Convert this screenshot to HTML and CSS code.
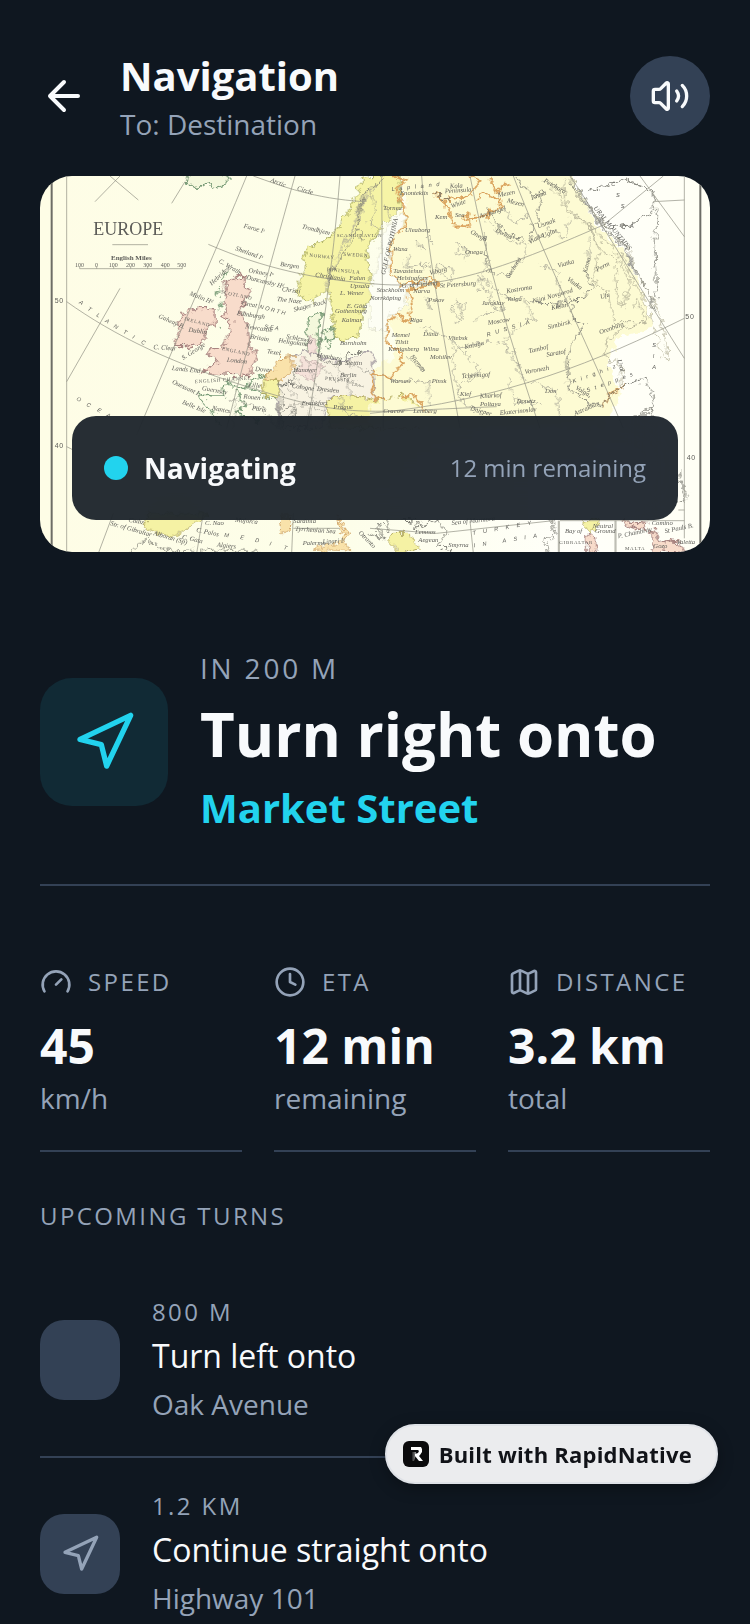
FILE: index.html
```html
<!DOCTYPE html>
<html lang="en">
<head>
<meta charset="utf-8">
<meta name="viewport" content="width=device-width, initial-scale=1">
<title>Navigation</title>
<link rel="stylesheet" href="styles.css">
</head>
<body>
<svg class="sprite" aria-hidden="true">
  <symbol id="i-nav" viewBox="0 0 24 24"><path d="M3 11 22 2 13 21 11 13Z"/></symbol>
</svg>
<main class="screen">
  <header class="header">
    <button class="back" type="button" aria-label="Back">
      <svg class="icon icon-lg" viewBox="0 0 24 24"><path d="m12 19-7-7 7-7M19 12H5"/></svg>
    </button>
    <div class="header-text">
      <h1 class="title">Navigation</h1>
      <p class="body-muted">To: Destination</p>
    </div>
    <button class="sound" type="button" aria-label="Sound">
      <svg class="icon icon-md" viewBox="0 0 24 24"><path d="M11 4.702a.705.705 0 0 0-1.203-.498L6.413 7.587A1.4 1.4 0 0 1 5.416 8H3a1 1 0 0 0-1 1v6a1 1 0 0 0 1 1h2.416a1.4 1.4 0 0 1 .997.413l3.383 3.384A.705.705 0 0 0 11 19.298zM16 9a5 5 0 0 1 0 6M19.364 18.364a9 9 0 0 0 0-12.728"/></svg>
    </button>
  </header>

  <section class="map" aria-label="Map">
    <svg class="map-art" viewBox="0 0 2010 1128" preserveAspectRatio="xMidYMid slice">
      <defs>
        <filter id="rough" x="-5%" y="-5%" width="110%" height="110%">
          <feTurbulence type="fractalNoise" baseFrequency="0.05" numOctaves="3" seed="4"/>
          <feDisplacementMap in="SourceGraphic" scale="34" xChannelSelector="R" yChannelSelector="G"/>
        </filter>
        <linearGradient id="paper" x1="0" x2="1" y1="0" y2="0">
          <stop offset="0" stop-color="#fefde6"/><stop offset=".45" stop-color="#fdfee9"/><stop offset=".8" stop-color="#fffffa"/><stop offset="1" stop-color="#fffff4"/>
        </linearGradient>
      </defs>
      <rect width="2010" height="1128" fill="url(#paper)"/>

      <!-- land -->
      <g filter="url(#rough)" stroke-linejoin="round">
        <g transform="translate(-30 -33)">
          <path class="land-russia" d="M1110 20H1620L1700 180 1790 270 1850 420 1870 490 1760 520 1735 600 1770 690 1720 790 1020 790 1030 620 1110 560 1080 470 1140 400 1090 340 1080 210 1130 120Z"/>
          <path class="land-sweden" d="M1110 20 1000 40 960 130 910 210 830 250 815 330 800 390 850 410 890 370 905 440 920 525 985 515 1000 440 1030 380 1010 250 1050 190 1110 130Z"/>
          <path class="mount" d="M1040 60 1000 110 990 160 960 200 930 260 900 330 880 380M1020 70 985 130 975 180 945 240M1060 120 1080 160M1045 190 1010 170"/>
          <path class="river-dark" d="M1060 40 1000 90 985 150 985 190 1000 230M985 190 960 230 900 330 895 370"/>
          <path class="land-pink" d="M610 338 650 330 635 362 662 378 650 410 628 425 640 455 655 490 658 545 682 572 668 605 660 632 600 628 560 625 515 622 545 602 565 592 532 568 548 548 582 545 590 515 600 505 605 470 572 462 590 440 580 410 592 385 585 355Z"/>
          <path class="land-green-line" d="M590 320 580 345M570 370 560 400M575 410 565 430M570 480 575 490"/>
          <path class="land-pink" d="M510 425 555 432 555 470 530 495 520 535 470 545 430 545 450 500 440 470 470 440Z"/>
          <path class="land-green-line" d="M470 25 465 50 500 65 530 58 560 66 590 50 588 25Z"/>
          <path class="land-green-line" d="M835 560 830 480 850 450 880 440 862 490 868 560M880 500 910 490 915 520 885 530ZM860 520 875 535M900 535 890 550"/>
          <path class="coast-green" d="M720 630 665 640 650 665 610 665 600 650 575 665 580 690 545 690 500 685 520 712 545 735 555 760 580 790M620 680 650 720 610 745 690 770M740 700 700 690 650 670"/>
          <path class="land-lilac" d="M830 560 930 590 1030 560 1030 640 1040 730 900 690 870 790H750L740 640 790 570 830 560Z"/>
          <path class="land-pink-soft" d="M835 515 855 520 858 565 835 562ZM820 580 880 600 850 650 800 620Z"/>
          <path class="land-orange" d="M790 572 750 575 730 620 700 635 745 650 785 620Z"/>
          <path class="land-yellow" d="M700 640 745 650 745 700 700 690ZM890 700 960 690 1040 705 1120 690 1160 720 1170 790H900Z"/>
          <path class="river" d="M760 650 800 700 790 740 760 770M830 580 850 640 880 690M900 590 950 640 960 700M870 600 910 640 1000 660M800 650 850 700 830 760M750 700 740 790M600 700 700 730 740 790M620 690 610 790M940 570 960 600 1030 620M780 720 840 720 880 740M930 700 940 740 1010 760"/>
          <path class="river-dark" d="M740 650 760 700 750 740 760 790M760 740C780 710 800 730 790 760M800 600 790 650 740 660M860 570 900 600 940 590 950 570 1000 560"/>
        </g>
        <g transform="translate(990 -33)">
          <path class="coast-orange" d="M60 30 105 45 80 75 95 110 110 150 105 185 65 215 62 325 90 360 190 340 205 355 110 375 125 420 115 470 80 445 55 470 50 540 95 560 95 600 60 640 0 620 15 700 75 705 130 690 170 740"/>
          <path class="coast-orange" d="M190 85 240 105 300 95 325 50 300 30M355 33 380 80 415 55M320 100 345 80 400 120 345 155 300 160 300 185 245 180 235 120 200 90M285 150 300 155 290 165Z"/>
          <path class="coast-orange" d="M700 730 710 700 760 660 720 690"/>
          <path class="sea" d="M75 150 105 150 95 185 60 230 55 320 90 362 185 345 105 372 110 425 60 450 45 500 0 490V380L20 300 45 200Z"/>
          <path class="land-russia" d="M0 720 80 690 180 750V790H0Z"/>
          <path class="river" d="M345 165 400 215 460 240 470 265 410 335 380 325M150 480 240 520 300 580 330 620 270 660 260 700 340 750M320 330 400 390 490 410 540 420 600 400M350 270 330 370 400 430 330 450 310 470M460 400 490 460 450 480 400 530 440 600 460 640 560 680 570 750M270 240 300 260 280 290M120 260 110 310 150 300 180 290M180 400 185 435M260 400 280 460 250 480M360 530 250 550 250 620 270 690M420 640 430 710 520 720M60 640 170 650 180 720"/>
          <path class="river" d="M140 230 160 260 150 240ZM170 215 190 240 180 225ZM150 290 180 310 160 300ZM100 290 105 310M205 300 250 310 240 350 205 320ZM260 235 290 250 285 275 262 260ZM245 430 290 410 270 460ZM170 400 185 440 175 430ZM0 70 20 130 0 180M510 300 560 320 570 380M530 190 590 220 600 160M660 220 650 290M400 130 430 170 480 150M110 570 160 620M380 530 430 560 440 610M320 380 360 380 370 430"/>
          <path class="river-dark" d="M600 410 640 400 670 365 650 330M605 420 605 465 645 480 600 540 590 600 600 680 700 730 710 700 760 660 830 640 850 700 840 750 790 750M435 40 490 90 520 80 500 160 480 230M350 130 400 195 465 230M660 80 760 40 850 80 850 140 780 180 720 190M860 130 855 270 860 400M490 410 540 420 600 410M240 105 190 85M345 200 350 300 370 325"/>
          <path class="mount" d="M600 33 620 90 680 150 720 200 780 260 800 320 840 390 870 450 900 590 880 580 850 480 820 400 790 350 750 270 680 200 590 130 580 50M520 40 570 90 590 140 650 170 700 260 750 290 780 360 760 430 740 400 735 300M660 190 690 250 670 350 720 390 730 470 830 470 800 400 790 430M700 540 760 490 830 470M710 520 705 570 760 610 750 660"/>
          <path class="river-dark" d="M610 45 640 95 690 170 740 215 770 260 795 310 830 370 855 440M600 50 650 120 700 190 760 250 800 330"/>
        </g>
        <g transform="translate(-30 672)">
          <path class="land-yellow" d="M355 340 340 385 385 400 440 410 480 380 540 340Z"/>
          <path class="land-orange" d="M750 350 755 400 780 400 785 350ZM920 350 930 390 960 400 940 430 960 455 850 450 880 435 920 430 950 390Z"/>
          <path class="river-dark" d="M290 460 350 415 380 440 420 455M420 455 560 450 700 460"/>
        </g>
        <g transform="translate(990 672)">
          <path class="land-yellow" d="M60 400 120 400 150 450 90 460 50 420ZM640 362 690 362 660 400Z"/>
          <path class="river-dark" d="M0 400 40 420 20 370 60 390 50 350M90 360 150 365 130 390 200 360 230 400 200 440 240 450M550 362 555 400 520 430 540 460"/>
          <path class="land-pink" d="M650 400 680 410 680 460 650 450ZM760 362 830 370 820 390 770 380ZM840 385 870 420 930 430 940 460 850 455Z"/>
          <path class="river-dark" d="M925 210 935 260 950 275 940 310 920 300M790 60 840 20 850 50"/>
        </g>
      </g>

      <!-- graticule and frame -->
      <g class="grid">
        <g transform="translate(-30 -33)">
          <path d="M110 33V1200M270 370 110 650M650 33C560 250 480 430 345 750L320 810M795 33C740 230 650 550 590 790M930 33C910 300 870 560 830 790M110 410C250 510 430 600 700 680S1000 740 1400 725M535 238C700 310 860 345 1050 358S1400 320 1720 180L1900 33M670 33C760 65 850 100 1000 110M240 33 325 105M270 33 195 110M465 50 425 115M247 239H354"/>
        </g>
        <g transform="translate(990 -33)">
          <path d="M35 33 40 790M155 33C170 250 220 510 270 790M300 33C350 290 420 530 510 790M430 33C520 270 640 510 760 790M600 33C700 180 840 420 943 580M943 33V1120M943 460C700 580 400 710 0 745M810 33 943 215M850 110 943 105"/>
        </g>
        <g transform="translate(-30 672)">
          <path d="M250 340 205 460M520 340 500 460M790 340 785 460M790 385H930M110 140 130 150"/>
        </g>
        <g transform="translate(990 672)">
          <path d="M0 385 200 400 550 362M300 362 310 460M565 362V460H568V362M735 362V460H738V362M570 362H943M925 330H943"/>
        </g>
        <path d="M119 272V278H427V272M170 272V278M221 272V278M272 272V278M323 272V278M375 272V278"/>
      </g>
      <path class="frame" d="M35 0V1128M1981 0V1128"/>

      <!-- lettering -->
      <g class="map-text" transform="translate(-30 -33)">
        <text class="t-title" x="190" y="210">EUROPE</text>
        <text class="t-mid" x="243" y="285">English Miles</text>
        <text class="t-num" x="135" y="305">100</text><text class="t-num" x="195" y="305">0</text><text class="t-num" x="236" y="305">100</text><text class="t-num" x="288" y="305">200</text><text class="t-num" x="340" y="305">300</text><text class="t-num" x="392" y="305">400</text><text class="t-num" x="442" y="305">500</text>
        <text class="t-deg" x="74" y="414">50</text>
        <text class="t-deg" x="74" y="850">40</text>
        <text class="t-deg" x="1966" y="461">50</text>
        <text class="t-deg" x="1970" y="886">40</text>
        <g class="t-sea">
          <text transform="translate(146 415) rotate(32)">A</text><text transform="translate(172 434) rotate(32)">T</text><text transform="translate(198 453) rotate(32)">L</text><text transform="translate(224 470) rotate(30)">A</text><text transform="translate(250 487) rotate(30)">N</text><text transform="translate(278 504) rotate(28)">T</text><text transform="translate(306 520) rotate(28)">I</text><text transform="translate(332 535) rotate(26)">C</text>
          <text transform="translate(138 704) rotate(32)">O</text><text transform="translate(168 722) rotate(30)">C</text><text transform="translate(200 738) rotate(28)">E</text><text transform="translate(228 754) rotate(28)">A</text>
          <text transform="translate(688 430) rotate(15)">N O R T H</text><text transform="translate(703 490) rotate(8)">S E A</text>
        </g>
        <g class="t-place">
          <text transform="translate(720 50) rotate(20)">Arctic</text><text transform="translate(800 75) rotate(16)">Circle</text>
          <text transform="translate(640 188) rotate(15)">Faroe Iˢ</text><text transform="translate(615 255) rotate(20)">Shetland Iˢ</text>
          <text transform="translate(565 292) rotate(30)">C. Wrath</text><text transform="translate(655 322) rotate(10)">Orkney Iˢ</text><text transform="translate(648 342) rotate(14)">Duncansby Hᵈ</text>
          <text transform="translate(545 362) rotate(-42)">Hebrides</text><text transform="translate(478 390) rotate(22)">Malin Hᵈ</text><text transform="translate(384 458) rotate(24)">Galway B.</text>
          <text transform="translate(370 552) rotate(4)">C. Clear</text><text transform="translate(425 615) rotate(6)">Lands End</text><text transform="translate(425 655) rotate(25)">Ouessant I.</text><text transform="translate(455 716) rotate(22)">Belle Isle</text>
          <text class="t-caps" transform="translate(462 465) rotate(15)">IRELAND</text><text transform="translate(475 500) rotate(8)">Dublin</text><text class="t-caps" transform="translate(572 385) rotate(12)">SCOTLAND</text><text class="t-caps" transform="translate(575 555) rotate(12)">ENGLAND</text>
          <text transform="translate(635 420) rotate(10)">Great</text><text transform="translate(620 450) rotate(8)">Edinburgh</text><text transform="translate(645 490) rotate(8)">Newcastle</text><text transform="translate(660 520) rotate(10)">Britain</text><text transform="translate(590 590) rotate(6)">London</text><text transform="translate(460 585) rotate(-32)">S. George</text>
          <text transform="translate(815 190) rotate(14)">Trondhjem</text><text transform="translate(750 303) rotate(8)">Bergen</text><text transform="translate(755 378) rotate(8)">Christi</text><text transform="translate(740 408) rotate(6)">The Naze</text><text transform="translate(792 440) rotate(-14)">Skager Rack</text>
          <text class="t-caps" transform="translate(838 275) rotate(6)">NORWAY</text><text class="t-caps" transform="translate(940 272) rotate(4)">SWEDEN</text><text class="t-caps" transform="translate(890 318) rotate(5)">PENINSULA</text><text class="t-caps" transform="translate(920 215)">SCANDINAVIAN</text>
          <text transform="translate(855 335) rotate(8)">Christiania</text><text transform="translate(958 345)">Falun</text><text transform="translate(960 370)">Upsala</text><text transform="translate(930 390)">L. Wener</text><text transform="translate(950 428)">E. Göta</text><text transform="translate(915 445)">Gothenburg</text><text transform="translate(935 470)">Kalmar</text>
          <text transform="translate(768 520) rotate(10)">Schleswig</text><text transform="translate(745 532) rotate(8)">Heligoland</text><text transform="translate(860 575) rotate(10)">Hamburg</text><text transform="translate(945 600)">Stettin</text><text transform="translate(930 636)">Berlin</text><text class="t-caps" transform="translate(885 645) rotate(4)">PRUSSIA</text><text transform="translate(860 677) rotate(6)">Dresden</text><text transform="translate(785 668) rotate(8)">Cologne</text><text transform="translate(815 720)">Frankfort</text><text transform="translate(790 620)">Hanover</text>
          <text transform="translate(710 565) rotate(8)">Texel</text><text transform="translate(675 618) rotate(4)">Dover</text><text transform="translate(655 665) rotate(6)">Lille</text><text transform="translate(640 700) rotate(6)">Rouen</text><text transform="translate(665 735) rotate(8)">Paris</text><text transform="translate(545 735) rotate(10)">Nantes</text><text class="t-caps" transform="translate(495 655) rotate(-4)">ENGLISH CHANNEL</text><text transform="translate(515 675) rotate(10)">Guernsey</text><text transform="translate(910 733)">Prague</text><text transform="translate(930 540)">Bornholm</text>
        </g>
      </g>
      <g class="map-text" transform="translate(990 -33)">
        <g class="t-sea"><text class="t-wide" transform="translate(65 78) rotate(-6)">Lapland</text><text class="t-wide" transform="translate(352 515) rotate(-17)">RUSSIA</text><text class="t-wide" transform="translate(610 655) rotate(-20)">Kirghiz</text><text class="t-wide" transform="translate(652 682) rotate(-20)">Steppes</text><text transform="translate(724 62)">C</text><text transform="translate(738 95)">S</text><text transform="translate(752 130)">S</text><text transform="translate(780 190)">A</text><text transform="translate(847 545)">S</text><text transform="translate(848 580)">I</text><text transform="translate(847 612)">A</text></g>
        <g class="t-place">
          <text transform="translate(240 70) rotate(-4)">Kola</text><text transform="translate(225 85) rotate(-4)">Peninsula</text><text transform="translate(90 90)">Enontekiis</text><text transform="translate(40 135)">Tornea</text><text transform="translate(245 130) rotate(-20)">White</text><text transform="translate(255 157)">Sea</text><text transform="translate(195 163)">Kem</text><text transform="translate(385 97) rotate(-12)">Mezen</text><text transform="translate(410 112) rotate(14)">Mezen</text><text transform="translate(485 105) rotate(-20)">Ishma</text><text transform="translate(330 160) rotate(-18)">Archangel</text><text transform="translate(300 205) rotate(28)">Onega</text>
          <text transform="translate(105 200)">Uleaborg</text><text transform="translate(70 258)">Wasa</text><text transform="translate(70 325)">Tavastehus</text><text transform="translate(80 345)">Helsingfors</text><text transform="translate(180 330) rotate(-14)">Viborg</text><text transform="translate(285 268)">Onega</text><text transform="translate(210 368) rotate(-4)">St Petersburg</text><text transform="translate(95 368) rotate(-4)">G. of Finland</text><text transform="translate(130 385)">Narva</text><text transform="translate(20 382)">Stockholm</text><text transform="translate(0 405)">Norrköping</text>
          <text transform="translate(45 330) rotate(-77)">GULF OF BOTHNIA</text><text transform="translate(505 190) rotate(-20)">Usmak</text><text transform="translate(480 238) rotate(-30)">Viatka</text><text transform="translate(520 220) rotate(-25)">Uglas</text><text transform="translate(375 200) rotate(26)">Dwina</text><text transform="translate(418 340) rotate(-58)">Suchona</text><text transform="translate(565 308) rotate(-16)">Viatka</text><text transform="translate(590 345) rotate(36)">Viatka</text><text transform="translate(650 325) rotate(-75)">Kama</text><text transform="translate(682 320) rotate(-28)">Perm</text><text transform="translate(692 402) rotate(-15)">Ufa</text>
          <text transform="translate(410 385) rotate(-10)">Kostroma</text><text transform="translate(410 408)">Volga</text><text transform="translate(335 420)">Jaroslav</text><text transform="translate(490 415) rotate(-16)">Nijni Novgorod</text><text transform="translate(545 435) rotate(-12)">Kasan</text><text transform="translate(355 480) rotate(-10)">Moscow</text><text transform="translate(535 493) rotate(-14)">Simbirsk</text><text transform="translate(690 508) rotate(-20)">Orenburg</text><text transform="translate(285 552) rotate(-12)">Kaluga</text><text transform="translate(478 565) rotate(-14)">Tambof</text><text transform="translate(530 575) rotate(-10)">Saratof</text><text transform="translate(465 627) rotate(-10)">Voronezh</text>
          <text transform="translate(175 410)">Pskov</text><text transform="translate(120 472)">Riga</text><text transform="translate(65 515)">Memel</text><text transform="translate(160 513)">Düna</text><text transform="translate(235 525)">Vitebsk</text><text transform="translate(75 538)">Tilsit</text><text transform="translate(55 558)">Königsberg</text><text transform="translate(160 558)">Wilna</text><text transform="translate(180 583)">Mohilev</text><text transform="translate(120 575) rotate(50)">Niemen</text><text transform="translate(60 655)">Warsaw</text><text transform="translate(185 655)">Pinsk</text><text transform="translate(275 640) rotate(-4)">Tchernigof</text><text transform="translate(270 692)">Kief</text><text transform="translate(330 700) rotate(-4)">Kharkof</text><text transform="translate(330 722)">Poltava</text><text transform="translate(440 715)">Donetz</text><text transform="translate(525 685)">Don</text><text transform="translate(300 735) rotate(16)">Dnieper</text><text transform="translate(390 750) rotate(-6)">Ekaterinoslav</text><text transform="translate(615 672) rotate(30)">Volga</text><text transform="translate(615 752) rotate(-24)">Astrakhan</text><text transform="translate(40 743)">Cracow</text><text transform="translate(130 743)">Lemberg</text><text transform="translate(742 585) rotate(75)">Ural</text>
          <text transform="translate(670 130) rotate(50)">URAL MOUNTAINS</text><text transform="translate(520 50) rotate(30)">Petchora</text>
        </g>
      </g>
      <g class="map-text" transform="translate(-30 672)">
        <g class="t-sea"><text transform="translate(582 410) rotate(8)">M</text><text transform="translate(630 417) rotate(10)">E</text><text transform="translate(674 425) rotate(12)">D</text><text transform="translate(718 436) rotate(14)">I</text><text transform="translate(760 447) rotate(16)">T</text></g>
        <g class="t-place"><text transform="translate(240 375) rotate(16)">Str. of Gibraltar</text><text transform="translate(295 365) rotate(10)">Cadiz</text><text transform="translate(370 405) rotate(16)">Alboran (Sp)</text><text transform="translate(455 417) rotate(12)">C. Gata</text><text transform="translate(498 395) rotate(12)">C. Palos</text><text transform="translate(525 375)">C. Nao</text><text transform="translate(560 440) rotate(6)">Algiers</text><text transform="translate(615 365) rotate(6)">Majorca</text><text transform="translate(795 392) rotate(4)">Tyrrhenian Sea</text><text transform="translate(790 368)">Sardinia</text><text transform="translate(818 435)">Palermo</text><text transform="translate(878 432) rotate(-4)">Lipari Iˢ</text><text transform="translate(985 400) rotate(45)">Otranto</text></g>
      </g>
      <g class="map-text" transform="translate(990 672)">
        <g class="t-sea"><text class="t-wider" transform="translate(308 405) rotate(-10)">TURKEY</text><text class="t-wider" transform="translate(312 442) rotate(-9)">IN ASIA</text></g>
        <g class="t-place"><text transform="translate(245 375) rotate(-6)">Sea of Marmora</text><text transform="translate(135 402)">Lemnos</text><text transform="translate(145 425)">Aegean</text><text transform="translate(235 442)">Smyrna</text><text transform="translate(585 400)">Bay of</text><text transform="translate(668 385)">Neutral</text><text transform="translate(675 398)">Ground</text><text class="t-caps" transform="translate(568 432)">GIBRALTAR</text><text transform="translate(745 415) rotate(-12)">P. Chambray</text><text transform="translate(845 375)">Comino</text><text transform="translate(885 400) rotate(-12)">St Pauls B.</text><text transform="translate(920 432)">Valetta</text><text transform="translate(850 445)">Gozo</text><text class="t-caps" transform="translate(765 450)">MALTA</text></g>
      </g>
    </svg>
    <div class="status">
      <span class="dot"></span>
      <strong class="status-name">Navigating</strong>
      <span class="status-time">12 min remaining</span>
    </div>
  </section>

  <section class="next">
    <div class="next-icon"><svg class="icon icon-xl"><use href="#i-nav"/></svg></div>
    <div class="next-text">
      <p class="next-distance">IN 200 M</p>
      <h2 class="next-action">Turn right onto</h2>
      <p class="next-street">Market Street</p>
    </div>
  </section>

  <section class="stats">
    <div class="stat">
      <div class="stat-head"><svg class="icon icon-sm" viewBox="0 0 24 24"><path d="m12 14 4-4M3.34 19a10 10 0 1 1 17.32 0"/></svg><span class="label">SPEED</span></div>
      <p class="stat-value">45</p>
      <p class="body-muted">km/h</p>
    </div>
    <div class="stat">
      <div class="stat-head"><svg class="icon icon-sm" viewBox="0 0 24 24"><circle cx="12" cy="12" r="10"/><path d="M12 6v6l4 2"/></svg><span class="label">ETA</span></div>
      <p class="stat-value">12 min</p>
      <p class="body-muted">remaining</p>
    </div>
    <div class="stat">
      <div class="stat-head"><svg class="icon icon-sm" viewBox="0 0 24 24"><path d="M14.106 5.553a2 2 0 0 0 1.788 0l3.659-1.83A1 1 0 0 1 21 4.619v12.764a1 1 0 0 1-.553.894l-4.553 2.277a2 2 0 0 1-1.788 0l-4.212-2.106a2 2 0 0 0-1.788 0l-3.659 1.83A1 1 0 0 1 3 19.381V6.618a1 1 0 0 1 .553-.894l4.553-2.277a2 2 0 0 1 1.788 0zM15 5.764v15M9 3.236v15"/></svg><span class="label">DISTANCE</span></div>
      <p class="stat-value">3.2 km</p>
      <p class="body-muted">total</p>
    </div>
  </section>

  <section class="upcoming">
    <h2 class="label">UPCOMING TURNS</h2>
    <ul class="turns">
      <li class="turn">
        <div class="turn-icon"></div>
        <div class="turn-text">
          <p class="label">800 M</p>
          <p class="turn-action">Turn left onto</p>
          <p class="body-muted">Oak Avenue</p>
        </div>
      </li>
      <li class="turn">
        <div class="turn-icon"><svg class="icon icon-md"><use href="#i-nav"/></svg></div>
        <div class="turn-text">
          <p class="label">1.2 KM</p>
          <p class="turn-action">Continue straight onto</p>
          <p class="body-muted">Highway 101</p>
        </div>
      </li>
    </ul>
  </section>
</main>
<a class="badge" href="#">
  <svg class="badge-logo" viewBox="0 0 26 26" aria-hidden="true">
    <defs><linearGradient id="fade" x1="0" y1="0" x2="1" y2="0"><stop offset="0" stop-color="#222"/><stop offset="1" stop-color="#999"/></linearGradient></defs>
    <rect width="26" height="26" rx="6" fill="#0b0b0c"/>
    <path d="M9 11h4v3l-2 6H9Z" fill="url(#fade)"/>
    <path d="M8 6h10l1 2v3l-2 3-1 1 4 5h-4l-4-5v-2l3-1 1-2-1-1H8Z" fill="#fff"/>
  </svg>
  <span>Built with RapidNative</span>
</a>
</body>
</html>
```
FILE: styles.css
```css
:root {
  --bg: #0f1720;
  --tile: #334155;
  --muted: #94a3b8;
  --text: #f8fafc;
  --accent: #22d3ee;
}

* { box-sizing: border-box; }

body {
  margin: 0;
  background: var(--bg);
  color: var(--text);
  font-family: "Open Sans", "Noto Sans", sans-serif;
  font-size: 28px;
  line-height: 40px;
}

h1, h2, p, ul { margin: 0; padding: 0; font-weight: 400; }
ul { list-style: none; }

button {
  padding: 0;
  border: 0;
  background: none;
  color: inherit;
  cursor: pointer;
}

.sprite { display: none; }

.screen {
  height: 100vh;
  padding: 48px 40px;
  overflow-y: auto;
  scrollbar-width: none;
}

.icon {
  display: block;
  flex: none;
  fill: none;
  stroke: currentColor;
  stroke-width: 2;
  stroke-linecap: round;
  stroke-linejoin: round;
}
.icon-sm { width: 32px; height: 32px; }
.icon-md { width: 40px; height: 40px; }
.icon-lg { width: 48px; height: 48px; }
.icon-xl { width: 64px; height: 64px; }

.label {
  color: var(--muted);
  font-size: 24px;
  line-height: 32px;
  letter-spacing: 0.1em;
}
.body-muted { color: var(--muted); }

/* Header */
.header {
  display: flex;
  align-items: center;
  gap: 32px;
}
.header-text { flex: 1; }
.title {
  font-size: 40px;
  line-height: 56px;
  font-weight: 700;
}
.sound {
  display: grid;
  place-items: center;
  width: 80px;
  height: 80px;
  border-radius: 50%;
  background: var(--tile);
}

/* Map */
.map {
  position: relative;
  height: 376px;
  margin-top: 32px;
  border-radius: 32px;
  overflow: hidden;
}
.map-art { display: block; width: 100%; height: 100%; }

.land-russia { fill: #fdfbd3; stroke: none; }
.land-sweden { fill: #f6f4a6; stroke: #a8aa5c; stroke-width: 3; }
.land-pink { fill: #f8dccb; stroke: #a88480; stroke-width: 4; }
.land-pink-soft { fill: #f6e2da; stroke: #b39c9c; stroke-width: 2; }
.land-green-line { fill: #f4f8dc; stroke: #7a9c78; stroke-width: 5; }
.coast-green { fill: none; stroke: #7a9c78; stroke-width: 5; }
.land-lilac { fill: #f8f3e2; stroke: #a79fa4; stroke-width: 4; }
.land-orange { fill: #f9e2aa; stroke: #cfa468; stroke-width: 3; }
.land-yellow { fill: #f5f2a4; stroke: #b3aa60; stroke-width: 3; }
.coast-orange { fill: none; stroke: #dba45e; stroke-width: 6; }
.sea { fill: #fdfef4; stroke: #a8a890; stroke-width: 1; }
.river { fill: none; stroke: #94938a; stroke-width: 2; }
.river-dark { fill: none; stroke: #77776f; stroke-width: 3; }
.mount { fill: none; stroke: #b5b299; stroke-width: 3; }
.grid { fill: none; stroke: #8c8c80; stroke-width: 2; }
.frame { fill: none; stroke: #6d6d66; stroke-width: 6; }

.map-text { fill: #5c5c58; font-family: "Liberation Serif", serif; }
.t-title { font-size: 54px; }
.t-mid { font-size: 21px; font-weight: 700; }
.t-num { font-size: 18px; }
.t-deg { font-family: "Liberation Sans", sans-serif; font-size: 21px; letter-spacing: 2px; }
.t-sea { font-family: "Liberation Sans", sans-serif; font-size: 17px; font-style: italic; }
.t-wide { letter-spacing: 14px; }
.t-wider { letter-spacing: 22px; }
.t-place { font-size: 20px; font-style: italic; }
.t-caps { font-size: 15px; font-style: normal; letter-spacing: 2px; }

.status {
  position: absolute;
  right: 32px;
  bottom: 32px;
  left: 32px;
  display: flex;
  align-items: center;
  gap: 16px;
  padding: 32px;
  border-radius: 24px;
  background: rgba(15, 23, 32, 0.9);
  backdrop-filter: blur(24px);
}
.dot {
  width: 24px;
  height: 24px;
  border-radius: 50%;
  background: var(--accent);
}
.status-name { flex: 1; font-weight: 700; }
.status-time { color: var(--muted); font-size: 24px; line-height: 32px; }

/* Next manoeuvre */
.next {
  display: flex;
  align-items: center;
  gap: 32px;
  margin-top: 48px;
  padding: 48px 0;
  border-bottom: 2px solid var(--tile);
}
.next-icon {
  display: grid;
  place-items: center;
  flex: none;
  width: 128px;
  height: 128px;
  border-radius: 32px;
  background: #112a35;
  color: var(--accent);
}
.next-text { display: grid; gap: 8px; }
.next-distance { color: var(--muted); letter-spacing: 0.1em; }
.next-action {
  font-size: 60px;
  line-height: 76px;
  font-weight: 700;
}
.next-street {
  color: var(--accent);
  font-size: 40px;
  line-height: 56px;
  font-weight: 700;
}

/* Stats */
.stats {
  display: grid;
  grid-template-columns: repeat(3, 1fr);
  gap: 32px;
  margin-top: 48px;
}
.stat {
  padding: 32px 0;
  border-bottom: 2px solid var(--tile);
}
.stat-head {
  display: flex;
  align-items: center;
  gap: 16px;
  margin-bottom: 16px;
  color: var(--muted);
}
.stat-value {
  font-size: 48px;
  line-height: 64px;
  font-weight: 700;
}

/* Upcoming turns */
.upcoming { margin-top: 48px; }
.turns { margin-top: 32px; }
.turn {
  display: flex;
  align-items: center;
  gap: 32px;
  padding: 32px 0;
  border-bottom: 2px solid var(--tile);
}
.turn-icon {
  display: grid;
  place-items: center;
  flex: none;
  width: 80px;
  height: 80px;
  border-radius: 24px;
  background: var(--tile);
  color: var(--muted);
}
.turn-text { display: grid; gap: 4px; }
.turn-action { font-size: 32px; line-height: 48px; }

/* Floating credit */
.badge {
  position: fixed;
  right: 32px;
  bottom: 140px;
  display: flex;
  align-items: center;
  gap: 10px;
  height: 60px;
  padding: 0 24px 0 16px;
  border: 2px solid #dfe2e7;
  border-radius: 30px;
  background: #ebecee;
  box-shadow: 0 4px 16px rgba(0, 0, 0, 0.3);
  color: #111318;
  font-size: 22px;
  font-weight: 700;
  letter-spacing: 0.01em;
  text-decoration: none;
}
.badge-logo { width: 26px; height: 26px; }
```
